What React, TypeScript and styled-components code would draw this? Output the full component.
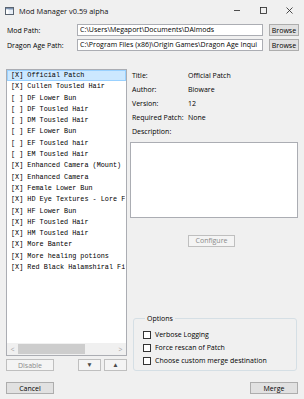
import React from 'react';
import styled, { createGlobalStyle } from 'styled-components';

const Global = createGlobalStyle`
  html, body { margin: 0; padding: 0; background: #f0f0f0; }
  body { width: 304px; height: 399px; overflow: hidden; font-family: "Open Sans", "Noto Sans", sans-serif; }
  * { box-sizing: border-box; }
`;

const Window = styled.div`
  width: 304px;
  height: 399px;
  display: flex;
  flex-direction: column;
  background: #f0f0f0;
  color: #000;
  font-size: 7px;
`;

const TitleBar = styled.div`
  height: 21px;
  display: flex;
  align-items: center;
  padding-left: 5px;
`;

const TitleText = styled.span`
  margin-left: 5px;
  font-size: 7.4px;
  color: #111;
  flex: 1;
`;

const Controls = styled.div`
  display: flex;
  height: 100%;
  padding-right: 2px;
`;

const ControlBtn = styled.div`
  width: 26px;
  height: 100%;
  display: flex;
  align-items: center;
  justify-content: center;
`;

const PathGrid = styled.div`
  display: grid;
  grid-template-columns: 65px 186px 30px;
  column-gap: 6px;
  row-gap: 3px;
  padding: 3px 0 0 6px;
  align-items: center;
`;

const Label = styled.span`
  padding-left: 1px;
  white-space: nowrap;
`;

const TextBox = styled.div`
  height: 12px;
  border: 1px solid #abadb3;
  background: #fff;
  padding: 0 2px;
  line-height: 10px;
  white-space: nowrap;
  overflow: hidden;
  text-overflow: clip;
`;

const Button = styled.div<{ $disabled?: boolean; $w?: number }>`
  height: 12px;
  width: ${p => (p.$w ? `${p.$w}px` : 'auto')};
  display: flex;
  align-items: center;
  justify-content: center;
  border: 1px solid ${p => (p.$disabled ? '#bfbfbf' : '#adadad')};
  background: ${p => (p.$disabled ? '#f4f4f4' : '#e1e1e1')};
  color: ${p => (p.$disabled ? '#8a8a8a' : '#000')};
  white-space: nowrap;
`;

const Main = styled.div`
  display: grid;
  grid-template-columns: 121px 168px;
  column-gap: 3px;
  padding-left: 6px;
  margin-top: 18px;
  height: 302px;
`;

const LeftCol = styled.div`
  display: flex;
  flex-direction: column;
`;

const ListBox = styled.div`
  height: 287px;
  border: 1px solid #abadb3;
  background: #fff;
  display: flex;
  flex-direction: column;
`;

const Items = styled.div`
  flex: 1;
  overflow: hidden;
`;

const Item = styled.div<{ $selected?: boolean }>`
  height: 11.3px;
  line-height: 9.3px;
  padding-left: 3px;
  border: 1px solid ${p => (p.$selected ? '#99d1ff' : 'transparent')};
  background: ${p => (p.$selected ? '#cce8ff' : 'transparent')};
  font-family: "Liberation Mono", "DejaVu Sans Mono", monospace;
  font-size: 6.8px;
  white-space: nowrap;
  overflow: hidden;
`;

const HScroll = styled.div`
  height: 12px;
  background: #f0f0f0;
  display: flex;
  align-items: center;
`;

const ScrollArrow = styled.div`
  width: 11px;
  display: flex;
  align-items: center;
  justify-content: center;
  color: #a3a3a3;
  font-size: 7px;
`;

const ScrollTrack = styled.div`
  flex: 1;
  height: 100%;
  display: flex;
  align-items: center;
`;

const Thumb = styled.div`
  height: 10px;
  background: #cdcdcd;
`;

const ListButtons = styled.div`
  display: flex;
  margin-top: 3px;
  gap: 3px;
`;

const Spacer = styled.div`
  flex: 1;
`;

const Arrow = styled.span`
  font-size: 6.5px;
  line-height: 6px;
  color: #4a4a4a;
`;

const RightCol = styled.div`
  display: flex;
  flex-direction: column;
  margin-top: -1px;
`;

const Details = styled.div`
  display: grid;
  grid-template-columns: 57px 1fr;
  grid-auto-rows: 14.2px;
  align-items: center;
  padding-left: 1px;
`;

const DescBox = styled.div`
  margin-top: 3px;
  height: 76px;
  border: 1px solid #abadb3;
  background: #fff;
`;

const ConfigureRow = styled.div`
  margin-top: 17px;
  padding-left: 58px;
  display: flex;
`;

const Group = styled.fieldset`
  margin: auto 1px 0 3px;
  padding: 5px 0 3px 9px;
  border: 1px solid #d5dfe5;
  border-radius: 3px;
  min-width: 0;
`;

const Legend = styled.legend`
  padding: 0 2px;
  margin-left: 2px;
  line-height: 9px;
`;

const CheckRow = styled.div`
  height: 13px;
  display: flex;
  align-items: center;
  gap: 4px;
`;

const CheckBox = styled.div`
  width: 8px;
  height: 8px;
  border: 1px solid #333;
  background: #fff;
`;

const Footer = styled.div`
  display: flex;
  justify-content: space-between;
  padding: 0 6px;
  margin-top: 11px;
`;

const mods: [boolean, string][] = [
  [true, 'Official Patch'],
  [true, 'Cullen Tousled Hair'],
  [false, 'DF Lower Bun'],
  [false, 'DF Tousled Hair'],
  [false, 'DM Tousled Hair'],
  [false, 'EF Lower Bun'],
  [false, 'EF Tousled hair'],
  [false, 'EM Tousled Hair'],
  [true, 'Enhanced Camera (Mount)'],
  [true, 'Enhanced Camera'],
  [true, 'Female Lower Bun'],
  [true, 'HD Eye Textures - Lore F'],
  [true, 'HF Lower Bun'],
  [true, 'HF Tousled Hair'],
  [true, 'HM Tousled Hair'],
  [true, 'More Banter'],
  [true, 'More healing potions'],
  [true, 'Red Black Halamshiral Fi'],
];

const details: [string, string][] = [
  ['Title:', 'Official Patch'],
  ['Author:', 'Bioware'],
  ['Version:', '12'],
  ['Required Patch:', 'None'],
  ['Description:', ''],
];

const options = ['Verbose Logging', 'Force rescan of Patch', 'Choose custom merge destination'];

export default function App() {
  return (
    <Window>
      <Global />
      <TitleBar>
        <svg width="9" height="8" viewBox="0 0 9 8">
          <rect x="0.5" y="0.5" width="8" height="7" fill="#e8eef6" stroke="#5a6470" />
          <rect x="1" y="1" width="7" height="1.5" fill="#7d93b2" />
          <rect x="1" y="2.5" width="2.5" height="4.5" fill="#ffffff" />
        </svg>
        <TitleText>Mod Manager v0.59 alpha</TitleText>
        <Controls>
          <ControlBtn>
            <svg width="7" height="7" viewBox="0 0 7 7">
              <line x1="0" y1="3.5" x2="6" y2="3.5" stroke="#222" strokeWidth="0.8" />
            </svg>
          </ControlBtn>
          <ControlBtn>
            <svg width="7" height="7" viewBox="0 0 7 7">
              <rect x="0.5" y="0.5" width="6" height="6" fill="none" stroke="#222" strokeWidth="0.8" />
            </svg>
          </ControlBtn>
          <ControlBtn>
            <svg width="7" height="7" viewBox="0 0 7 7">
              <path d="M0.5 0.5 L6.5 6.5 M6.5 0.5 L0.5 6.5" stroke="#222" strokeWidth="0.8" />
            </svg>
          </ControlBtn>
        </Controls>
      </TitleBar>

      <PathGrid>
        <Label>Mod Path:</Label>
        <TextBox>C:\Users\Megaport\Documents\DAImods</TextBox>
        <Button>Browse</Button>
        <Label>Dragon Age Path:</Label>
        <TextBox>C:\Program Files (x86)\Origin Games\Dragon Age Inqui</TextBox>
        <Button>Browse</Button>
      </PathGrid>

      <Main>
        <LeftCol>
          <ListBox>
            <Items>
              {mods.map(([on, name], i) => (
                <Item key={name} $selected={i === 0}>
                  {on ? '[X]' : '[ ]'} {name}
                </Item>
              ))}
            </Items>
            <HScroll>
              <ScrollArrow>&lt;</ScrollArrow>
              <ScrollTrack>
                <Thumb style={{ width: '67px' }} />
              </ScrollTrack>
              <ScrollArrow>&gt;</ScrollArrow>
            </HScroll>
          </ListBox>
          <ListButtons>
            <Button $disabled $w={48}>Disable</Button>
            <Spacer />
            <Button $disabled $w={23}><Arrow>▼</Arrow></Button>
            <Button $disabled $w={23}><Arrow>▲</Arrow></Button>
          </ListButtons>
        </LeftCol>

        <RightCol>
          <Details>
            {details.map(([k, v]) => (
              <React.Fragment key={k}>
                <Label>{k}</Label>
                <span>{v}</span>
              </React.Fragment>
            ))}
          </Details>
          <DescBox />
          <ConfigureRow>
            <Button $disabled $w={47}>Configure</Button>
          </ConfigureRow>
          <Group>
            <Legend>Options</Legend>
            {options.map(o => (
              <CheckRow key={o}>
                <CheckBox />
                <span>{o}</span>
              </CheckRow>
            ))}
          </Group>
        </RightCol>
      </Main>

      <Footer>
        <Button $w={48}>Cancel</Button>
        <Button $w={48}>Merge</Button>
      </Footer>
    </Window>
  );
}
